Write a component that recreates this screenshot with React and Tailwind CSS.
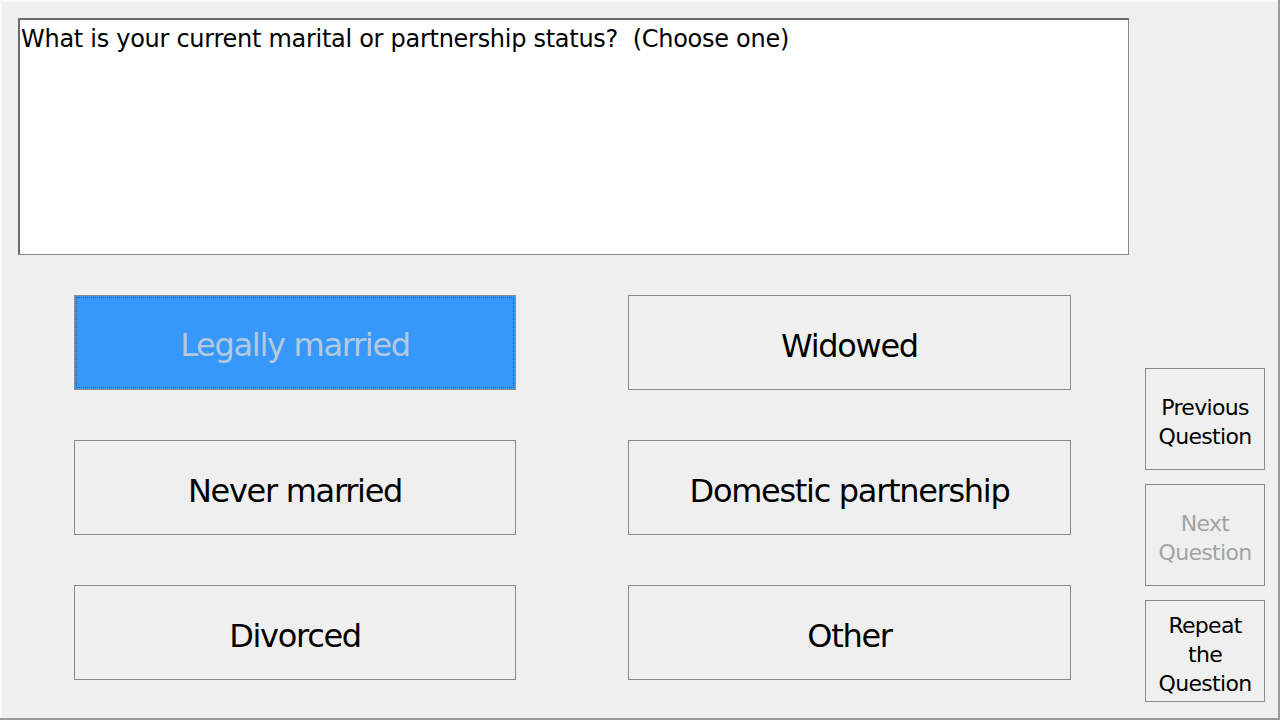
export default function App() {
  const font = { fontFamily: '"DejaVu Sans", Tahoma, Verdana, sans-serif' };
  const Opt = ({ label, selected }) => (
    <div
      className={
        selected
          ? "h-[95px] border border-[#8c8c8c] bg-[#3798fb] p-px flex"
          : "h-[95px] border border-[#8a8a8a] bg-[#efefef] flex items-center justify-center pt-[7px]"
      }
    >
      {selected ? (
        <div className="flex-1 border border-dotted border-[#1f5fa8] flex items-center justify-center pt-[5px] text-[32px] tracking-[-1.3px] text-[#b5c9de]">
          {label}
        </div>
      ) : (
        <span className="text-[32px] tracking-[-1.3px] text-black">{label}</span>
      )}
    </div>
  );
  const Side = ({ lines, disabled }) => (
    <div
      className={
        "h-[102px] border border-[#8a8a8a] bg-[#efefef] flex flex-col items-center justify-center pt-[6px] text-[22px] leading-[29px] tracking-[-0.7px] " +
        (disabled ? "text-[#a3a3a3]" : "text-black")
      }
    >
      {lines.map((l) => (
        <span key={l}>{l}</span>
      ))}
    </div>
  );
  return (
    <div
      style={font}
      className="w-[1280px] h-[720px] bg-[#efefef] border-r-2 border-b-2 border-[#9a9a9a] overflow-hidden relative"
    >
      <div className="absolute inset-0 border-l-2 border-t-2 border-[#f9f9f9] pointer-events-none" />
      <div className="pt-[18px] pl-[18px]">
        <div className="w-[1111px] h-[237px] bg-white border-t-2 border-l-2 border-[#6a6a6a] border-r border-b border-r-[#8a8a8a] border-b-[#8a8a8a] pl-[1px] pt-[5px] text-[24px] leading-[29px] tracking-[-0.28px] text-black">
          What is your current marital or partnership status?&nbsp; (Choose one)
        </div>
      </div>
      <div className="flex items-start pl-[74px] pt-[40px]">
        <div className="grid grid-cols-[442px_443px] grid-rows-[95px_95px_95px] gap-x-[112px] gap-y-[50px] w-[997px]">
          <Opt label="Legally married" selected />
          <Opt label="Widowed" />
          <Opt label="Never married" />
          <Opt label="Domestic partnership" />
          <Opt label="Divorced" />
          <Opt label="Other" />
        </div>
        <div className="ml-[74px] mt-[73px] w-[120px] flex flex-col gap-[14px]">
          <Side lines={["Previous", "Question"]} />
          <Side lines={["Next", "Question"]} disabled />
          <Side lines={["Repeat", "the", "Question"]} />
        </div>
      </div>
    </div>
  );
}
